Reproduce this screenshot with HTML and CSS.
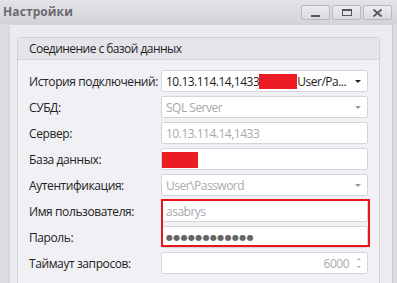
FILE: index.html
```html
<!DOCTYPE html>
<html lang="ru">
<head>
<meta charset="utf-8">
<title>Настройки</title>
<link rel="stylesheet" href="styles.css">
</head>
<body>
<div class="window">
  <div class="titlebar">
    <span class="title">Настройки</span>
    <div class="wbtns">
      <div class="wbtn"><span class="g-min"></span></div>
      <div class="wbtn"><span class="g-max"></span></div>
      <div class="wbtn">
        <svg width="11" height="8" viewBox="0 0 11 8"><path d="M1.5 0.5 L9.5 7.5 M9.5 0.5 L1.5 7.5" stroke="#555" stroke-width="1.8" fill="none"/></svg>
      </div>
    </div>
  </div>
  <div class="frame">
    <div class="panel">
      <div class="group">
        <div class="group-head">Соединение с базой данных</div>
        <div class="group-body">
          <div class="form">
            <label class="lbl">История подключений:</label>
            <div class="field combo">
              <span class="val">10.13.114.14,1433<span class="redact r1"></span>User/Pa...</span>
              <span class="arrow"></span>
            </div>

            <label class="lbl">СУБД:</label>
            <div class="field combo dis">
              <span class="val">SQL Server</span>
              <span class="arrow"></span>
            </div>

            <label class="lbl">Сервер:</label>
            <div class="field dis"><span class="val">10.13.114.14,1433</span></div>

            <label class="lbl">База данных:</label>
            <div class="field"><span class="redact r2"></span></div>

            <label class="lbl">Аутентификация:</label>
            <div class="field combo dis">
              <span class="val">User\Password</span>
              <span class="arrow"></span>
            </div>

            <label class="lbl">Имя пользователя:</label>
            <div class="field dis"><span class="val">asabrys</span></div>

            <label class="lbl">Пароль:</label>
            <div class="field"><span class="dots">●●●●●●●●●●●●</span></div>

            <label class="lbl">Таймаут запросов:</label>
            <div class="field spin">
              <span class="num">6000</span>
              <span class="spinner"><span class="up"></span><span class="down"></span></span>
            </div>

            <div class="highlight"></div>
          </div>
        </div>
      </div>
    </div>
  </div>
</div>
</body>
</html>
```

FILE: styles.css
```css
* { box-sizing: border-box; }
html, body { margin: 0; padding: 0; }
body {
  font-family: "Open Sans", "Noto Sans", "DejaVu Sans", sans-serif;
  font-size: 12px;
  letter-spacing: -0.4px;
  color: #1e1e1e;
  background: #dcdce0;
}
.window {
  width: 397px;
  height: 283px;
  overflow: hidden;
  display: flex;
  flex-direction: column;
  background: #dcdce0;
}
.titlebar {
  height: 24px;
  flex: none;
  display: flex;
  align-items: flex-start;
  justify-content: space-between;
  background: linear-gradient(#e3e3e7, #d3d3d8);
}
.title {
  font-weight: 700;
  color: #6a6a6e;
  font-size: 12px;
  margin: 3px 0 0 3px;
  letter-spacing: 0.1px;
}
.wbtns {
  display: flex;
  gap: 2px;
  margin: 5px 5px 0 0;
}
.wbtn {
  width: 29px;
  height: 15px;
  border: 1px solid #b9b9be;
  border-radius: 2px;
  background: linear-gradient(#ececf0, #dadade);
  display: flex;
  align-items: center;
  justify-content: center;
  position: relative;
}
.g-min {
  width: 9px;
  height: 2px;
  background: #555;
  margin-top: 6px;
}
.g-max {
  width: 10px;
  height: 7px;
  border: 1.5px solid #555;
  border-top-width: 2.5px;
}
.frame {
  flex: 1;
  display: flex;
  padding: 0 5px 0 9px;
}
.panel {
  flex: 1;
  background: #ececf0;
  border-left: 1px solid #d4d4d8;
  border-right: 1px solid #cbcbd0;
  border-top: 1px solid #d4d4d8;
  padding: 12px 12px 0 7px;
}
.group {
  border: 1px solid #d2d2d6;
  border-bottom: none;
  border-radius: 3px 3px 0 0;
  background: #f1f1f5;
  height: 100%;
}
.group-head {
  height: 22px;
  line-height: 21px;
  padding-left: 11px;
  background: #e5e5e9;
  border-bottom: 1px solid #d6d6da;
  border-radius: 3px 3px 0 0;
  color: #1e1e1e;
  font-size: 12px;
  letter-spacing: -0.55px;
}
.group-body {
  padding: 10px 11px 0 11px;
}
.form {
  position: relative;
  display: grid;
  grid-template-columns: 132px 207px;
  row-gap: 4px;
  align-items: center;
}
.lbl {
  color: #222;
  white-space: nowrap;
}
.field {
  height: 22px;
  background: #fff;
  border: 1px solid #d5d5d9;
  border-radius: 2px;
  display: flex;
  align-items: center;
  padding: 0 4px;
  overflow: hidden;
  white-space: nowrap;
  position: relative;
  letter-spacing: -0.5px;
}
.val { flex: 1; display: flex; align-items: center; }
.dis .val { color: #a9a9ad; }
.arrow {
  width: 0;
  height: 0;
  border-left: 3px solid transparent;
  border-right: 3px solid transparent;
  border-top: 3px solid #222;
  margin-right: 2px;
}
.dis .arrow { border-top-color: #9a9a9e; }
.redact {
  display: inline-block;
  background: #ec1c24;
}
.r1 { width: 38px; height: 15px; }
.r2 { width: 36px; height: 16px; margin-left: -4px; margin-top: 1px; }
.dots {
  color: #666;
  font-size: 8px;
  letter-spacing: 0.35px;
  font-family: "DejaVu Sans", sans-serif;
}
.spin { justify-content: flex-end; }
.num { color: #a9a9ad; margin-right: 8px; }
.spinner {
  display: flex;
  flex-direction: column;
  gap: 6px;
  margin-right: 2px;
}
.up, .down {
  width: 0;
  height: 0;
  border-left: 2.5px solid transparent;
  border-right: 2.5px solid transparent;
}
.up { border-bottom: 2.5px solid #aaa; }
.down { border-top: 2.5px solid #aaa; }
.highlight {
  position: absolute;
  left: 132px;
  top: 129px;
  width: 209px;
  height: 48px;
  border: 2px solid #e8141e;
  pointer-events: none;
}
```
